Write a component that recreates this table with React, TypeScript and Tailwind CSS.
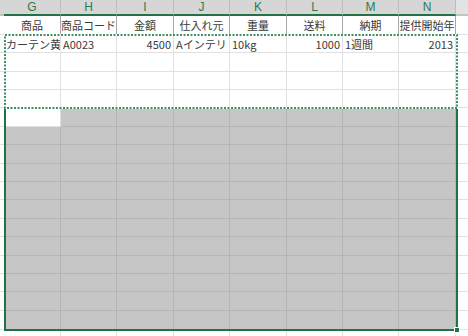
import React from 'react';

// Spreadsheet columns G..N, widths in px
const cols = [
  { key: 'G', w: 'w-[57px]' },
  { key: 'H', w: 'w-[56px]' },
  { key: 'I', w: 'w-[57px]' },
  { key: 'J', w: 'w-[56px]' },
  { key: 'K', w: 'w-[57px]' },
  { key: 'L', w: 'w-[56px]' },
  { key: 'M', w: 'w-[56px]' },
  { key: 'N', w: 'w-[57px]' },
];

const headers = ['商品', '商品コード', '金額', '仕入れ元', '重量', '送料', '納期', '提供開始年'];

const firstRow: { v: string; right?: boolean }[] = [
  { v: 'カーテン黄' },
  { v: 'A0023' },
  { v: '4500', right: true },
  { v: 'Aインテリ' },
  { v: '10kg' },
  { v: '1000', right: true },
  { v: '1週間' },
  { v: '2013', right: true },
];

const plainHeights = ['h-[19px]', 'h-[18px]', 'h-[18px]'];
const grayHeights = [
  'h-[19px]', 'h-[18px]', 'h-[19px]', 'h-[18px]', 'h-[18px]', 'h-[19px]',
  'h-[18px]', 'h-[19px]', 'h-[18px]', 'h-[18px]', 'h-[19px]', 'h-[19px]',
];

const font = { fontFamily: '"Noto Sans CJK JP", "Noto Sans", sans-serif' };

const Edge = ({ h }: { h: string }) => (
  <div className={`w-[4px] shrink-0 border-b border-[#e1e1e1] ${h}`} />
);

const Tail = ({ h }: { h: string }) => (
  <div className={`flex-1 border-b border-[#e1e1e1] ${h}`} />
);

export default function App() {
  return (
    <div className="relative w-[468px] h-[336px] overflow-hidden bg-white text-[11px] text-[#3a3a3a]" style={font}>
      {/* column letters */}
      <div className="flex h-[16px] bg-[#d6d6d6]">
        <div className="w-[4px] shrink-0 border-b-2 border-[#c4c4c4]" />
        {cols.map((c) => (
          <div
            key={c.key}
            className={`${c.w} shrink-0 flex items-center justify-center border-r border-b-2 border-r-[#bdbdbd] border-b-[#217346] text-[12px] leading-none text-[#2f7a4f]`}
            style={{ fontFamily: '"Liberation Sans", Arial, sans-serif' }}
          >
            {c.key}
          </div>
        ))}
        <div className="flex-1 bg-[#e3e3e3] border-b-2 border-[#c4c4c4]" />
      </div>

      {/* field names */}
      <div className="flex">
        <Edge h="h-[19px]" />
        {cols.map((c, i) => (
          <div
            key={c.key}
            className={`${c.w} h-[19px] shrink-0 overflow-hidden whitespace-nowrap text-center leading-[18px] border-r border-b border-r-[#a9a9a9] border-b-[#d4d4d4]`}
          >
            {headers[i]}
          </div>
        ))}
        <Tail h="h-[19px]" />
      </div>

      {/* first record */}
      <div className="flex">
        <Edge h="h-[18px]" />
        {cols.map((c, i) => (
          <div
            key={c.key}
            className={`${c.w} h-[18px] shrink-0 overflow-hidden whitespace-nowrap px-[2px] leading-[18px] border-r border-b border-[#e1e1e1] ${firstRow[i].right ? 'text-right' : 'text-left'}`}
          >
            {firstRow[i].v}
          </div>
        ))}
        <Tail h="h-[18px]" />
      </div>

      {/* empty rows inside copy range */}
      {plainHeights.map((h, r) => (
        <div key={r} className="flex">
          <Edge h={h} />
          {cols.map((c) => (
            <div key={c.key} className={`${c.w} ${h} shrink-0 border-r border-b border-[#e1e1e1]`} />
          ))}
          <Tail h={h} />
        </div>
      ))}

      {/* selected block */}
      {grayHeights.map((h, r) => (
        <div key={r} className="flex">
          <Edge h={h} />
          {cols.map((c, i) => (
            <div
              key={c.key}
              className={`${c.w} ${h} shrink-0 border-r border-b ${
                r === 0 && i === 0 ? 'bg-white border-[#e1e1e1]' : 'bg-[#c6c6c6] border-[#b5b5b5]'
              }`}
            />
          ))}
          <Tail h={h} />
        </div>
      ))}

      {/* below the block */}
      <div className="flex">
        <Edge h="h-[18px]" />
        {cols.map((c) => (
          <div key={c.key} className={`${c.w} h-[18px] shrink-0 border-r border-b border-[#e1e1e1]`} />
        ))}
        <Tail h="h-[18px]" />
      </div>

      {/* selection outline + fill handle */}
      <div className="absolute left-[4px] top-[107px] w-[454px] h-[224px] border-2 border-[#217346]" />
      <div className="absolute left-[454px] top-[327px] w-[6px] h-[6px] bg-[#217346] border border-white" />

      {/* copy range (marching ants) */}
      <svg className="absolute left-[4px] top-[34px]" width="454" height="75">
        <rect x="1" y="1" width="452" height="73" fill="none" stroke="#ffffff" strokeWidth="2" />
        <rect x="1" y="1" width="452" height="73" fill="none" stroke="#3f8f62" strokeWidth="2" strokeDasharray="2 1.5" />
      </svg>
    </div>
  );
}
